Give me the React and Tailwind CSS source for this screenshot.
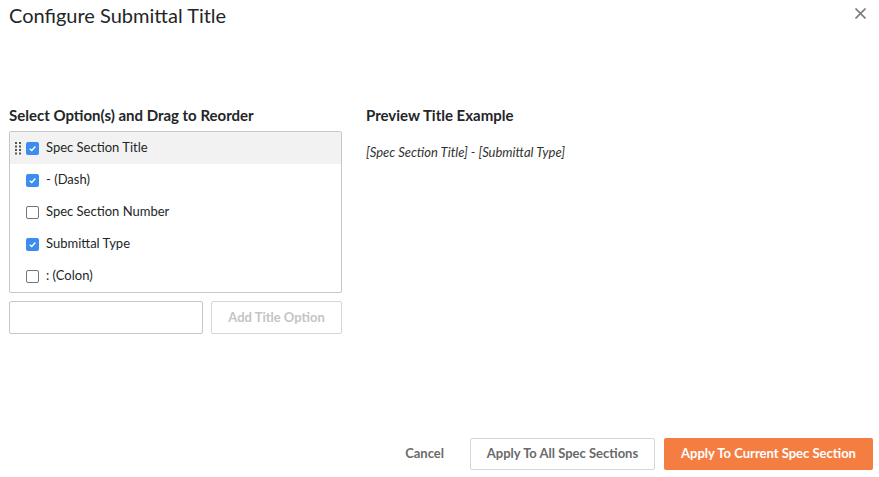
import { useState } from "react";

const initialOptions = [
    { id: 1, label: "Spec Section Title", checked: true },
    { id: 2, label: "- (Dash)", checked: true },
    { id: 3, label: "Spec Section Number", checked: false },
    { id: 4, label: "Submittal Type", checked: true },
    { id: 5, label: ": (Colon)", checked: false },
];

function DragHandle() {
    return (
        <svg width="7" height="13" viewBox="0 0 7 13" className="text-[#555]">
            {[0, 1, 2, 3].map((r) =>
                [0, 1].map((c) => (
                    <rect key={`${r}-${c}`} x={c * 4} y={r * 3.5} width="2" height="2" fill="currentColor" />
                ))
            )}
        </svg>
    );
}

function Check({ checked }) {
    if (!checked) {
        return <span className="w-[13px] h-[13px] border border-[#767676] rounded-[2px] bg-white shrink-0"></span>;
    }
    return (
        <span className="w-[13px] h-[13px] rounded-[2px] bg-[#3b8ef0] flex items-center justify-center shrink-0">
            <svg width="9" height="9" viewBox="0 0 10 10">
                <path d="M2 5.2 L4.2 7.3 L8.2 2.8" stroke="white" strokeWidth="1.6" fill="none" />
            </svg>
        </span>
    );
}

export default function App() {
    const [options, setOptions] = useState(initialOptions);
    const [hovered] = useState(1);

    const toggle = (id) =>
        setOptions(options.map((o) => (o.id === id ? { ...o, checked: !o.checked } : o)));

    const preview = options
        .filter((o) => o.checked)
        .map((o) => (o.label.startsWith("-") ? "-" : o.label.startsWith(":") ? ":" : `[${o.label}]`))
        .join(" ");

    return (
        <div className="w-[879px] h-[477px] bg-white text-[#232628] font-['Lato','Noto_Sans',sans-serif] flex flex-col">
            <div className="flex items-start justify-between pl-[9px] pr-[12px] pt-[1px]">
                <h1 className="text-[20px] leading-[28px]">Configure Submittal Title</h1>
                <button className="mt-[6px] text-[#777]">
                    <svg width="13" height="13" viewBox="0 0 13 13">
                        <path d="M1.5 1.5 L11.5 11.5 M11.5 1.5 L1.5 11.5" stroke="currentColor" strokeWidth="1.7" />
                    </svg>
                </button>
            </div>

            <div className="flex pl-[9px] pt-[76px] gap-[24px]">
                <div className="w-[333px]">
                    <h2 className="text-[15px] font-bold leading-[20px]">Select Option(s) and Drag to Reorder</h2>
                    <div className="mt-[6px] border border-[#c7c7c7] rounded-[2px]">
                        {options.map((o) => (
                            <div
                                key={o.id}
                                onClick={() => toggle(o.id)}
                                className={`h-[32px] flex items-center text-[13px] cursor-pointer ${hovered === o.id ? "bg-[#f2f2f2]" : ""}`}
                            >
                                <span className="w-[16px] pl-[5px] flex items-center">
                                    {hovered === o.id && <DragHandle />}
                                </span>
                                <Check checked={o.checked} />
                                <span className="ml-[7px]">{o.label}</span>
                            </div>
                        ))}
                    </div>
                    <div className="flex gap-[8px] mt-[8px]">
                        <input className="w-[194px] h-[33px] border border-[#c7c7c7] rounded-[2px] px-2 text-[13px] outline-none" />
                        <button className="flex-1 h-[33px] border border-[#d6d6d6] rounded-[2px] text-[13px] font-bold text-[#c4c4c4]">
                            Add Title Option
                        </button>
                    </div>
                </div>
                <div>
                    <h2 className="text-[15px] font-bold leading-[20px]">Preview Title Example</h2>
                    <p className="mt-[18px] text-[13px] italic text-[#333]">{preview}</p>
                </div>
            </div>

            <div className="mt-auto mb-[7px] flex items-center justify-end gap-[9px] pr-[6px]">
                <button className="text-[13px] font-bold text-[#6a6a6a] px-[16px] mr-[1px]">Cancel</button>
                <button className="h-[32px] w-[185px] border border-[#d6d6d6] rounded-[2px] text-[13px] font-bold text-[#6a6a6a]">
                    Apply To All Spec Sections
                </button>
                <button className="h-[32px] w-[209px] bg-[#f47e42] rounded-[2px] text-[13px] font-bold text-white">
                    Apply To Current Spec Section
                </button>
            </div>
        </div>
    );
}
